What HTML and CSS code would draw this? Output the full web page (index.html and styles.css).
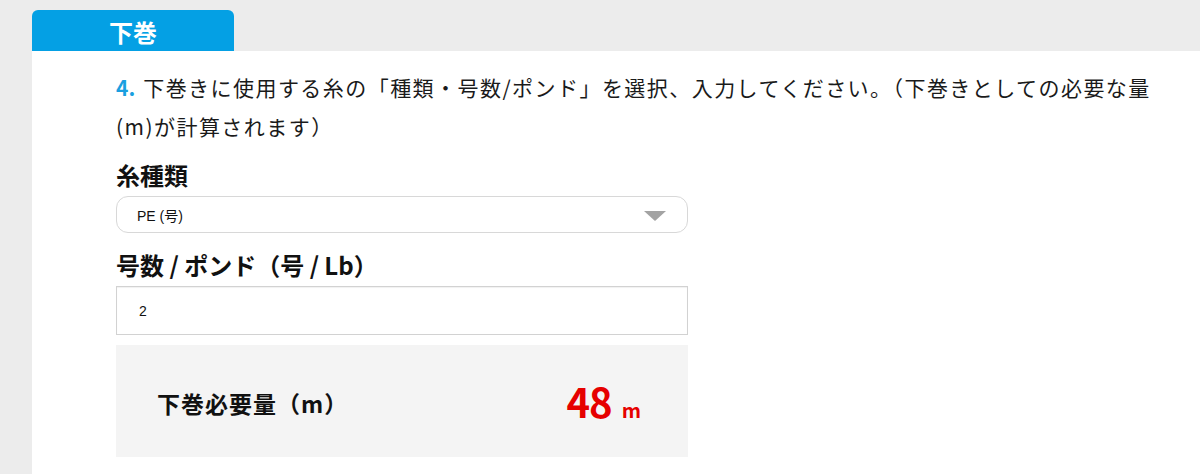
FILE: index.html
```html
<!DOCTYPE html>
<html lang="ja">
<head>
  <meta charset="UTF-8" />
  <meta name="viewport" content="width=device-width, initial-scale=1.0"/>
  <title>下巻計算</title>
  <link rel="stylesheet" href="styles.css">
</head>
<body>

  <div class="section">
    <div class="tab">下巻</div>

    <div class="panel">
      <p class="step"><span class="step-num">4.</span>下巻きに使用する糸の「種類・号数/ポンド」を選択、入力してください。（下巻きとしての必要な量(m)が計算されます）</p>

      <div class="field-label">糸種類</div>
      <div class="select">
        <span>PE (号)</span>
        <svg class="arrow" width="22" height="10" viewBox="0 0 22 10"><polygon points="0,0 22,0 11,10" fill="#a3a3a3"/></svg>
      </div>

      <div class="field-label">号数 / ポンド（号 / Lb）</div>
      <div class="input">2</div>

      <div class="result">
        <div class="result-label">下巻必要量（m）</div>
        <div class="result-value">48<span class="unit">m</span></div>
      </div>
    </div>
  </div>

</body>
</html>
```

FILE: styles.css
```css
body {
  margin: 0;
  padding: 10px 0 0 32px;
  background: #ececec;
  font-family: "Noto Sans CJK JP", "Noto Sans", sans-serif;
  color: #111;
  height: 474px;
  box-sizing: border-box;
  overflow: hidden;
}

.tab {
  width: 202px;
  height: 41px;
  background: #04a0e4;
  color: white;
  border-radius: 6px 6px 0 0;
  font-size: 24px;
  font-weight: bold;
  line-height: 43px;
  text-align: center;
}

.panel {
  background: white;
  padding: 17px 40px 30px 84px;
  height: 430px;
  box-sizing: border-box;
}

.step {
  margin: 0;
  font-size: 21px;
  line-height: 39px;
  letter-spacing: 1.45px;
  color: #1a1a1a;
  width: 1050px;
}
.step-num {
  color: #1a9fe0;
  font-weight: bold;
  letter-spacing: 0;
  margin-right: 8px;
}

.field-label {
  margin-top: 12px;
  font-size: 24px;
  font-weight: bold;
  line-height: 34px;
  color: #111;
}

.select {
  width: 572px;
  height: 37px;
  box-sizing: border-box;
  border: 1px solid #d8d8d8;
  border-radius: 12px;
  display: flex;
  align-items: center;
  justify-content: space-between;
  padding: 0 21px 0 20px;
  font-family: "Liberation Sans", "Noto Sans CJK JP", sans-serif;
  font-size: 14px;
  margin-top: 4px;
}
.select + .field-label {
  margin-top: 15px;
}
.arrow {
  margin-top: 3px;
}

.input {
  width: 572px;
  height: 49px;
  box-sizing: border-box;
  border: 1px solid #d2d2d2;
  box-shadow: inset 0 1px 1px rgba(0,0,0,0.06);
  display: flex;
  align-items: center;
  padding-left: 22px;
  font-family: "Liberation Sans", sans-serif;
  font-size: 14px;
  margin-top: 4px;
}

.result {
  width: 572px;
  height: 112px;
  margin-top: 10px;
  background: #f4f4f4;
  display: flex;
  align-items: center;
  justify-content: space-between;
  padding: 0 47px 0 41px;
  box-sizing: border-box;
}
.result-label {
  font-size: 23px;
  font-weight: bold;
  letter-spacing: 1px;
  margin-top: 4px;
}
.result-value {
  color: #e60000;
  font-size: 40px;
  font-weight: bold;
  letter-spacing: -1px;
  line-height: 1;
}
.result-value .unit {
  font-size: 20px;
  margin-left: 10px;
  letter-spacing: 0;
}
```
